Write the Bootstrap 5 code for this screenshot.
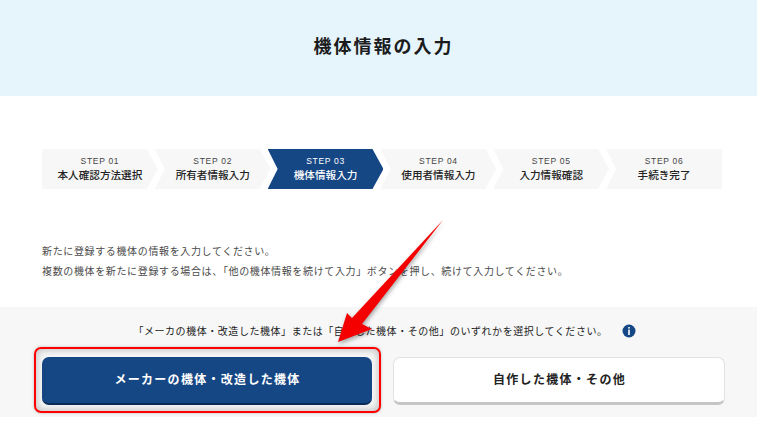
<!DOCTYPE html>
<html lang="ja"><head><meta charset="utf-8">
<link href="https://cdn.jsdelivr.net/npm/bootstrap@5.3.0/dist/css/bootstrap.min.css" rel="stylesheet">
<style>
html,body{height:433px;overflow:hidden}
body{font-family:"Noto Sans CJK JP","Liberation Sans",sans-serif;color:#222;background:#fff;position:relative}
.hero{height:96px;background:#e6f5fc;padding:0 0 5px 10px}
.hero h1{font-size:18px;font-weight:700;letter-spacing:2px;margin:0;color:#1c1c1c}
.steps{margin:53px 35px 0 42px;height:40px}
.stp{flex:1 1 0;min-width:0;margin-right:-3px;background:#f7f7f7;color:#222;clip-path:polygon(0 0,calc(100% - 11px) 0,100% 50%,calc(100% - 11px) 100%,0 100%,10px 50%);line-height:1}
.stp:first-child{clip-path:polygon(0 0,calc(100% - 11px) 0,100% 50%,calc(100% - 11px) 100%,0 100%)}
.stp:last-child{margin-right:0;clip-path:polygon(0 0,100% 0,100% 100%,0 100%,10px 50%)}
.stp.now{background:#164785;color:#fff}
.stp b{display:block;font-weight:400;font-size:8.5px;letter-spacing:.7px;font-family:"Liberation Sans",sans-serif;margin-bottom:5px;color:#444}
.stp.now b{color:#fff}
.stp span{font-size:10.6px;font-weight:500}
.intro{margin:52px 30px 0 42px;font-size:10px;letter-spacing:.64px;color:#4a4a4a;line-height:20px}
.panel{margin-top:26px;height:110px;background:#f7f7f7;padding:14px 32px 0 42px}
.ask{font-size:10px;letter-spacing:.55px;height:19px;color:#222;padding-left:2px}
.inf{width:14px;height:14px;margin-left:14px;flex:none}
.pick{gap:21px;margin-top:17px}
.choice{flex:1 1 0;height:48px;border-radius:7px;font-size:12px;font-weight:700;letter-spacing:1.3px;padding:0 0 3px 1px}
.choice.main,.choice.main:hover{background:#164785;color:#fff;border:0;border-bottom:2px solid #0b2c58}
.choice.alt,.choice.alt:hover{background:#fff;color:#222;border:1px solid #e2e2e2;border-bottom:3px solid #c6c6c6}
.ring{position:absolute;left:34px;top:347px;width:347px;height:66px;border:2px solid #f00;border-radius:7px;box-shadow:inset 0 0 8px rgba(0,0,0,.28),0 0 3px rgba(0,0,0,.25);pointer-events:none}
.arrow{position:absolute;left:320px;top:210px;width:130px;height:140px;pointer-events:none;filter:drop-shadow(1px 2px 2px rgba(0,0,0,.35))}
</style></head><body>
<div class="hero d-flex align-items-center justify-content-center"><h1>機体情報の入力</h1></div>
<div class="steps d-flex">
<div class="stp text-center d-flex flex-column justify-content-center"><b>STEP 01</b><span>本人確認方法選択</span></div>
<div class="stp text-center d-flex flex-column justify-content-center"><b>STEP 02</b><span>所有者情報入力</span></div>
<div class="stp now text-center d-flex flex-column justify-content-center"><b>STEP 03</b><span>機体情報入力</span></div>
<div class="stp text-center d-flex flex-column justify-content-center"><b>STEP 04</b><span>使用者情報入力</span></div>
<div class="stp text-center d-flex flex-column justify-content-center"><b>STEP 05</b><span>入力情報確認</span></div>
<div class="stp text-center d-flex flex-column justify-content-center"><b>STEP 06</b><span>手続き完了</span></div>
</div>
<div class="intro"><div>新たに登録する機体の情報を入力してください。</div><div>複数の機体を新たに登録する場合は、「他の機体情報を続けて入力」ボタンを押し、続けて入力してください。</div></div>
<div class="panel">
<div class="ask d-flex align-items-center justify-content-center"><span>「メーカの機体・改造した機体」または「自作した機体・その他」のいずれかを選択してください。</span>
<svg class="inf" viewBox="0 0 14 14"><circle cx="7" cy="7" r="6.5" fill="#164785"/><rect x="6.2" y="3" width="1.6" height="1.6" fill="#fff"/><rect x="6.2" y="5.6" width="1.6" height="5.4" fill="#fff"/></svg></div>
<div class="pick d-flex"><button class="btn choice main">メーカーの機体・改造した機体</button><button class="btn choice alt">自作した機体・その他</button></div>
</div>
<div class="ring"></div>
<svg class="arrow" viewBox="320 210 130 140"><polygon fill="#f40000" points="443,220 362,324 372,329 338,342 347,313 352,318" /></svg>
<script src="https://cdn.jsdelivr.net/npm/bootstrap@5.3.0/dist/js/bootstrap.bundle.min.js"></script>
</body></html>
